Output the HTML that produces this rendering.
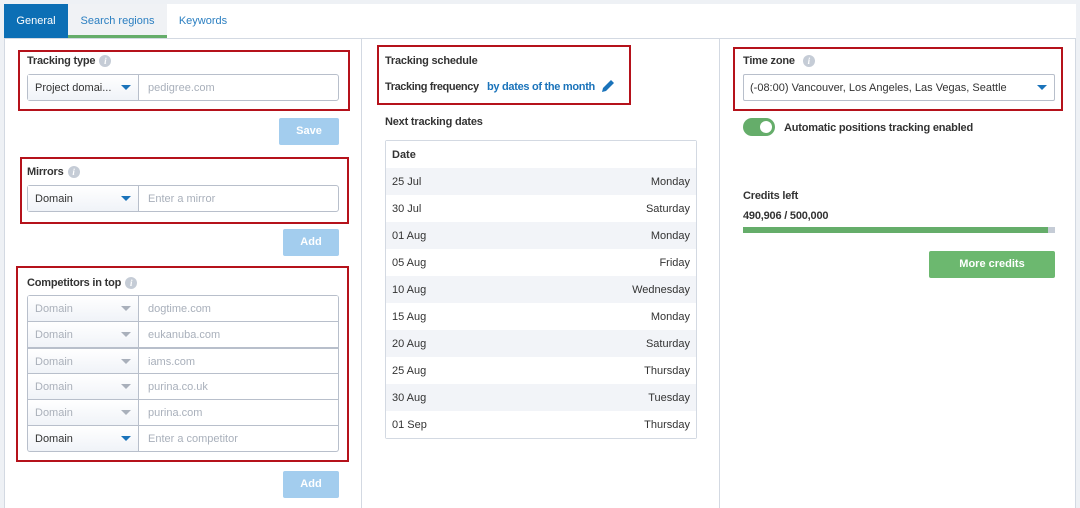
<html><head><style>
*{box-sizing:border-box;margin:0;padding:0}
body{width:1080px;height:508px;background:#eef1f5;font-family:"Liberation Sans",sans-serif;font-size:11px;color:#333;position:relative;overflow:hidden}
.a{position:absolute}
.lbl{font-weight:bold;color:#333;font-size:11px;letter-spacing:-0.2px}
.info{display:inline-block;width:12px;height:12px;border-radius:50%;background:#c5ccd6;color:#fff;font-size:9px;text-align:center;line-height:12px;font-style:italic;font-weight:bold;vertical-align:middle;margin-left:4px;font-family:"Liberation Serif",serif}
.red{border:2px solid #b5121b}
.sel{border:1px solid #b8bfcb;border-radius:3px;background:#fff;display:flex;height:27px}
.sel .l{width:111px;border-right:1px solid #b8bfcb;background:linear-gradient(#fff,#f0f3f8);padding-left:7px;line-height:26px;position:relative}
.sel .r{flex:1;padding-left:9px;line-height:26px;color:#a9b0bb}
.tri{position:absolute;right:7px;top:10px;width:0;height:0;border-left:5px solid transparent;border-right:5px solid transparent;border-top:5px solid #1a73ba}
.btn{background:#a3cdee;color:#fff;font-weight:bold;text-align:center;border-radius:2px;line-height:27px}
.row{height:26px;border-top:1px solid #b8bfcb;display:flex}
.row .l{width:111px;border-right:1px solid #b8bfcb;background:linear-gradient(#fff,#f0f3f8);padding-left:7px;line-height:26px;position:relative;color:#aab0ba}
.row .r{flex:1;padding-left:9px;line-height:26px;color:#a9b0bb}
.row .tri{border-top-color:#a9b0bb}
.tr{height:27px;line-height:28px;padding:0 6px;display:flex;justify-content:space-between;color:#333}
</style></head><body>
<div class="a" style="left:4px;top:4px;width:1072px;height:504px;background:#fff"></div>
<div class="a" style="left:4px;top:4px;width:64px;height:34px;background:#0c6fb5;color:#fff;line-height:34px;text-align:center">General</div>
<div class="a" style="left:68px;top:4px;width:99px;height:34px;background:#f0f2f5;border-bottom:3px solid #65ad6a;color:#2b7fc1;line-height:34px;text-align:center">Search regions</div>
<div class="a" style="left:167px;top:4px;width:72px;height:34px;color:#2b7fc1;line-height:34px;text-align:center">Keywords</div>
<div class="a" style="left:4px;top:38px;width:1072px;height:1px;background:#d3d9e2"></div>
<div class="a" style="left:4px;top:38px;width:1px;height:470px;background:#d3d9e2"></div>
<div class="a" style="left:1075px;top:38px;width:1px;height:470px;background:#d3d9e2"></div>
<div class="a" style="left:361px;top:38px;width:1px;height:470px;background:#d3d9e2"></div>
<div class="a" style="left:719px;top:38px;width:1px;height:470px;background:#d3d9e2"></div>

<div class="a red" style="left:18px;top:50px;width:332px;height:61px"></div>
<div class="a lbl" style="left:27px;top:55px">Tracking type<span class="info">i</span></div>
<div class="a sel" style="left:27px;top:74px;width:312px"><div class="l" style="color:#333">Project domai...<span class="tri"></span></div><div class="r">pedigree.com</div></div>
<div class="a btn" style="left:279px;top:118px;width:60px">Save</div>

<div class="a red" style="left:20px;top:157px;width:329px;height:67px"></div>
<div class="a lbl" style="left:27px;top:166px">Mirrors<span class="info">i</span></div>
<div class="a sel" style="left:27px;top:185px;width:312px"><div class="l" style="color:#333">Domain<span class="tri"></span></div><div class="r">Enter a mirror</div></div>
<div class="a btn" style="left:283px;top:229px;width:56px">Add</div>

<div class="a red" style="left:16px;top:266px;width:333px;height:196px"></div>
<div class="a lbl" style="left:27px;top:277px">Competitors in top<span class="info">i</span></div>
<div class="a" style="left:27px;top:295px;width:312px;border:1px solid #b8bfcb;border-top:none;border-radius:3px;overflow:hidden">
<div class="row"><div class="l">Domain<span class="tri"></span></div><div class="r">dogtime.com</div></div>
<div class="row"><div class="l">Domain<span class="tri"></span></div><div class="r">eukanuba.com</div></div>
<div class="row" style="border-top-width:2px"><div class="l">Domain<span class="tri"></span></div><div class="r">iams.com</div></div>
<div class="row"><div class="l">Domain<span class="tri"></span></div><div class="r">purina.co.uk</div></div>
<div class="row"><div class="l">Domain<span class="tri"></span></div><div class="r">purina.com</div></div>
<div class="row"><div class="l" style="color:#333">Domain<span class="tri" style="border-top-color:#1a73ba"></span></div><div class="r">Enter a competitor</div></div>
</div>
<div class="a btn" style="left:283px;top:471px;width:56px">Add</div>

<div class="a red" style="left:377px;top:45px;width:254px;height:60px"></div>
<div class="a lbl" style="left:385px;top:55px">Tracking schedule</div>
<div class="a lbl" style="left:385px;top:81px;letter-spacing:-0.4px">Tracking frequency</div>
<div class="a" style="left:487px;top:81px;color:#1a73ba;font-weight:bold;letter-spacing:-0.3px">by dates of the month</div>
<svg class="a" style="left:600px;top:78px" width="16" height="16" viewBox="0 0 16 16"><path d="M2 14l1-4 8-8 3 3-8 8z" fill="#1a73ba"/></svg>
<div class="a lbl" style="left:385px;top:116px">Next tracking dates</div>
<div class="a" style="left:385px;top:140px;width:312px;border:1px solid #d3d9e2;border-radius:2px">
<div class="tr" style="font-weight:bold;background:#fff"><span>Date</span></div>
<div class="tr" style="background:#f2f4f8"><span>25 Jul</span><span>Monday</span></div>
<div class="tr" style="background:#fff"><span>30 Jul</span><span>Saturday</span></div>
<div class="tr" style="background:#f2f4f8"><span>01 Aug</span><span>Monday</span></div>
<div class="tr" style="background:#fff"><span>05 Aug</span><span>Friday</span></div>
<div class="tr" style="background:#f2f4f8"><span>10 Aug</span><span>Wednesday</span></div>
<div class="tr" style="background:#fff"><span>15 Aug</span><span>Monday</span></div>
<div class="tr" style="background:#f2f4f8"><span>20 Aug</span><span>Saturday</span></div>
<div class="tr" style="background:#fff"><span>25 Aug</span><span>Thursday</span></div>
<div class="tr" style="background:#f2f4f8"><span>30 Aug</span><span>Tuesday</span></div>
<div class="tr" style="background:#fff"><span>01 Sep</span><span>Thursday</span></div>
</div>

<div class="a red" style="left:733px;top:47px;width:330px;height:64px"></div>
<div class="a lbl" style="left:743px;top:55px">Time zone<span class="info" style="margin-left:8px">i</span></div>
<div class="a" style="left:743px;top:74px;width:312px;height:27px;border:1px solid #b8bfcb;border-radius:2px;line-height:26px;padding-left:6px">(-08:00) Vancouver, Los Angeles, Las Vegas, Seattle<span class="tri" style="top:10px"></span></div>
<div class="a" style="left:743px;top:118px;width:32px;height:18px;border-radius:9px;background:#65ad6a"><div style="position:absolute;right:3px;top:3px;width:12px;height:12px;border-radius:50%;background:#fff"></div></div>
<div class="a lbl" style="left:784px;top:122px">Automatic positions tracking enabled</div>
<div class="a lbl" style="left:743px;top:190px">Credits left</div>
<div class="a lbl" style="left:743px;top:210px">490,906 / 500,000</div>
<div class="a" style="left:743px;top:227px;width:312px;height:6px;background:#c5ccd6"><div style="width:305px;height:6px;background:#65ad6a"></div></div>
<div class="a btn" style="left:929px;top:251px;width:126px;background:#6cb86f;line-height:27px">More credits</div>
</body></html>
